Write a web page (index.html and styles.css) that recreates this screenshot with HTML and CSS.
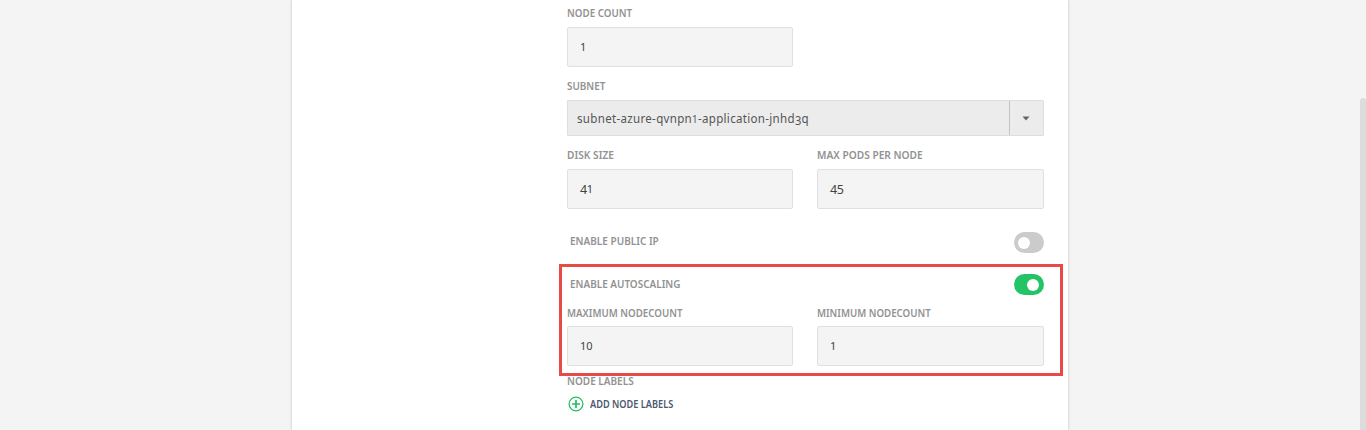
FILE: index.html
```html
<!DOCTYPE html>
<html lang="en">
<head>
<meta charset="utf-8">
<title>Node pool</title>
<link rel="stylesheet" href="styles.css">
</head>
<body>
<main class="panel">
  <form class="form">
    <div class="field half">
      <label class="label"><span class="w-count">NODE COUNT</span></label>
      <div class="input"><span class="small-num">1</span></div>
    </div>
    <div class="field subnet">
      <label class="label"><span class="w-subnet">SUBNET</span></label>
      <div class="select">
        <div class="select-value"><span class="w-value">subnet-azure-qvnpn<span class="one">1</span>-application-jnhd<span class="three">3</span>q</span></div>
        <div class="select-arrow"><svg width="8" height="5" viewBox="0 0 8 5"><path d="M0.5 .5h7L4 4.5z" fill="#666"/></svg></div>
      </div>
    </div>
    <div class="pair sizes">
      <div class="field">
        <label class="label"><span class="w-disk">DISK SIZE</span></label>
        <div class="input"><span class="num"><span class="low">4</span><span class="small-num">1</span></span></div>
      </div>
      <div class="field">
        <label class="label"><span class="w-pods">MAX PODS PER NODE</span></label>
        <div class="input"><span class="num low">45</span></div>
      </div>
    </div>
    <div class="toggle-row public">
      <span class="label"><span class="w-public">ENABLE PUBLIC IP</span></span>
      <span class="toggle"><i class="knob"></i></span>
    </div>
    <section class="autoscaling">
      <div class="toggle-row">
        <span class="label"><span class="w-auto">ENABLE AUTOSCALING</span></span>
        <span class="toggle on"><i class="knob"></i></span>
      </div>
      <div class="pair limits">
        <div class="field">
          <label class="label"><span class="w-max">MAXIMUM NODECOUNT</span></label>
          <div class="input"><span class="small-num">10</span></div>
        </div>
        <div class="field">
          <label class="label"><span class="w-min">MINIMUM NODECOUNT</span></label>
          <div class="input"><span class="small-num">1</span></div>
        </div>
      </div>
    </section>
    <div class="label node-labels"><span class="w-labels">NODE LABELS</span></div>
    <div class="add">
      <svg width="16" height="16" viewBox="0 0 16 16" fill="none" stroke="#24c063"><circle cx="8" cy="8" r="6.9" stroke-width="1.3"/><path d="M8 4v8M4 8h8" stroke-width="1.7"/></svg>
      <span class="add-text"><span class="w-add">ADD NODE LABELS</span></span>
    </div>
  </form>
</main>
<div class="scroll-thumb"></div>
</body>
</html>
```
FILE: styles.css
```css
* { box-sizing: border-box; }
body {
  margin: 0;
  height: 430px;
  overflow: hidden;
  background: #f4f4f4;
  font-family: "Noto Sans", "Open Sans", sans-serif;
}
.panel {
  width: 776px;
  height: 430px;
  margin-left: 292px;
  padding: 6px 24px 0 275px;
  background: #fff;
  box-shadow: 0 0 3px rgba(0, 0, 0, .2);
}
.form { display: flex; flex-direction: column; width: 477px; }
.label {
  display: block;
  height: 14px;
  line-height: 14px;
  font-size: 11px;
  font-weight: 600;
  color: #929292;
  white-space: nowrap;
}
.label > span, .w-value, .w-add { display: inline-block; transform-origin: 0 50%; }
.w-count { transform: scaleX(.89); }
.w-subnet { transform: scaleX(.9); }
.w-disk { transform: scaleX(.925); }
.w-pods { transform: scaleX(.925); }
.w-public { transform: scaleX(.91); }
.w-auto { transform: scaleX(.905); }
.w-max { transform: scaleX(.885); }
.w-min { transform: scaleX(.883); }
.w-labels { transform: scaleX(.91); }
.w-value { transform: scaleX(.888); letter-spacing: .35px; }
.w-add { transform: scaleX(.92); }
.one { font-size: 11px; }
.three { position: relative; top: 2px; font-size: 12.5px; }
.half { width: 226px; }
.input {
  display: flex;
  align-items: center;
  height: 40px;
  margin-top: 7px;
  padding-left: 12px;
  border: 1px solid #e0e0e0;
  border-radius: 2px;
  background: #f4f4f4;
  color: #444;
}
.small-num { font-size: 11px; line-height: 14px; }
.num { display: flex; align-items: baseline; font-size: 12.5px; line-height: 16px; }
.low { position: relative; top: 1px; letter-spacing: -.4px; }
.subnet { margin-top: 12px; }
.select {
  display: flex;
  height: 36px;
  margin-top: 7px;
  border: 1px solid #dedede;
  border-radius: 1px;
  background: #ececec;
}
.select-value {
  flex: 1;
  padding-left: 9px;
  font-size: 13px;
  line-height: 34px;
  color: #555;
  white-space: nowrap;
}
.select-arrow {
  display: flex;
  align-items: center;
  justify-content: center;
  width: 34px;
  padding-right: 2px;
  border-left: 1px solid #c3c3c3;
}
.pair { display: grid; grid-template-columns: 226px 227px; column-gap: 24px; }
.sizes { margin-top: 12px; }
.toggle-row { display: flex; justify-content: space-between; height: 21px; padding-left: 3px; }
.toggle-row .label { margin-top: 2px; }
.public { margin-top: 23px; }
.toggle {
  display: flex;
  align-items: center;
  width: 30px;
  height: 21px;
  padding: 0 5px 0 4px;
  border-radius: 10.5px;
  background: #cbcbcb;
}
.knob { width: 12px; height: 12px; border-radius: 50%; background: #fff; }
.toggle.on { justify-content: flex-end; background: #24c366; }
.autoscaling {
  width: 504px;
  height: 112px;
  margin: 11px 0 0 -8px;
  padding: 7px 16px 0 5px;
  border: 3px solid #e84a45;
}
.autoscaling .label { margin-top: 3px; }
.autoscaling .limits .label { margin-top: 0; }
.limits { margin-top: 11px; }
.limits .input { margin-top: 6px; }
.node-labels { margin-top: -2px; }
.add { display: flex; align-items: center; gap: 6px; height: 16px; margin: 8px 0 0 1px; }
.add-text { font-size: 10px; font-weight: 600; line-height: 16px; color: #4c5970; white-space: nowrap; }
.scroll-thumb {
  position: absolute;
  right: 0;
  top: 98px;
  width: 6px;
  height: 340px;
  border-radius: 3px 3px 0 0;
  background: #dcdcdc;
}
```
